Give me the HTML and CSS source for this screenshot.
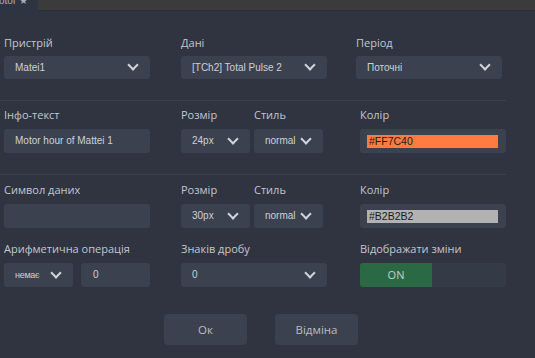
FILE: index.html
```html
<!DOCTYPE html>
<html lang="uk">
<head>
  <meta charset="UTF-8">
  <meta name="viewport" content="width=device-width, initial-scale=1.0">
  <title>Налаштування віджета</title>
  <link rel="stylesheet" href="styles.css">
</head>
<body>
  <div class="topbar">
    <div class="tab"><span>otor ★</span></div>
    <div class="tab-rest"></div>
  </div>

  <div class="form">
    <div class="row row1">
      <div class="field w146">
        <label>Пристрій</label>
        <div class="select">Matei1<i class="chev"></i></div>
      </div>
      <div class="field w146 col2">
        <label>Дані</label>
        <div class="select">[TCh2] Total Pulse 2<i class="chev"></i></div>
      </div>
      <div class="field w146 col3a">
        <label>Період</label>
        <div class="select">Поточні<i class="chev"></i></div>
      </div>
    </div>

    <div class="divider"></div>

    <div class="row row2">
      <div class="field w146">
        <label>Інфо-текст</label>
        <div class="input">Motor hour of Mattei 1</div>
      </div>
      <div class="field w69 col2">
        <label>Розмір</label>
        <div class="select">24px<i class="chev"></i></div>
      </div>
      <div class="field w69 col2b">
        <label>Стиль</label>
        <div class="select">normal<i class="chev"></i></div>
      </div>
      <div class="field w146 col3b">
        <label>Колір</label>
        <div class="color"><span class="swatch orange">#FF7C40</span></div>
      </div>
    </div>

    <div class="divider"></div>

    <div class="row row3">
      <div class="field w146">
        <label>Символ даних</label>
        <div class="input"></div>
      </div>
      <div class="field w69 col2">
        <label>Розмір</label>
        <div class="select">30px<i class="chev"></i></div>
      </div>
      <div class="field w69 col2b">
        <label>Стиль</label>
        <div class="select">normal<i class="chev"></i></div>
      </div>
      <div class="field w146 col3b">
        <label>Колір</label>
        <div class="color"><span class="swatch grey">#B2B2B2</span></div>
      </div>
    </div>

    <div class="row row4">
      <div class="field w146">
        <label>Арифметична операція</label>
        <div class="pair">
          <div class="select small">немає<i class="chev"></i></div>
          <div class="input small">0</div>
        </div>
      </div>
      <div class="field w146 col2">
        <label>Знаків дробу</label>
        <div class="select">0<i class="chev"></i></div>
      </div>
      <div class="field w146 col3">
        <label>Відображати зміни</label>
        <div class="toggle"><span class="on">ON</span><span class="off"></span></div>
      </div>
    </div>

    <div class="actions">
      <button>Ок</button>
      <button>Відміна</button>
    </div>
  </div>
</body>
</html>
```

FILE: styles.css
```css
body {
  margin: 0;
  background: #2f3440;
  color: #c3c7cf;
  font-family: 'Open Sans', sans-serif;
  overflow: hidden;
}
.topbar {
  display: flex;
  height: 11px;
}
.tab {
  width: 38px;
  background: #2e3441;
  overflow: hidden;
}
.tab span {
  display: block;
  margin-top: -5px;
  margin-left: -1px;
  font-size: 10px;
  line-height: 12px;
  color: #aab0ba;
  font-family: 'Liberation Sans', sans-serif;
}
.tab-rest {
  flex: 1;
  background: #3b3b3c;
  border-bottom: 1px solid #2a2d33;
}
.form {
  padding-left: 4px;
}
.row {
  display: flex;
}
.row1 { margin-top: 25px; }
.row2 { margin-top: 7px; }
.row3 { margin-top: 8px; }
.row4 { margin-top: 14px; }
.divider {
  height: 1px;
  width: 506px;
  margin: 21px 0 0 -4px;
  background: #3c414d;
}
.field label {
  display: block;
  font-size: 11px;
  line-height: 14px;
  color: #c3c7cf;
  margin-bottom: 6px;
}
.row2 .field label,
.row3 .field label,
.row4 .field label {
  margin-bottom: 7px;
}
.w146 { width: 146px; }
.w69 { width: 69px; }
.col2 { margin-left: 31px; }
.col2b { margin-left: 4px; }
.col3 { margin-left: 33px; }
.col3a { margin-left: 29px; }
.col3b { margin-left: 37px; }
.select,
.input,
.color {
  position: relative;
  box-sizing: border-box;
  height: 24px;
  background: #3b414e;
  border-radius: 3px;
  font-family: 'Liberation Sans', sans-serif;
  font-size: 10px;
  line-height: 24px;
  color: #cdd1d8;
  padding-left: 11px;
}
.row1 .select { height: 23px; line-height: 23px; }
.chev {
  position: absolute;
  right: 13px;
  top: 6px;
  width: 6px;
  height: 6px;
  border-right: 2px solid #d0d4da;
  border-bottom: 2px solid #d0d4da;
  transform: rotate(45deg);
}
.row1 .chev { top: 5px; }
.w69 .chev { right: 13px; }
.color {
  padding: 6px 8px 0 7px;
}
.swatch {
  display: block;
  height: 13px;
  line-height: 13px;
  padding-left: 2px;
  font-size: 10.5px;
  color: #1a1a1a;
}
.orange { background: #ff7c40; }
.grey { background: #b2b2b2; }
.pair {
  display: flex;
  gap: 8px;
}
.select.small {
  width: 69px;
  font-size: 9px;
  letter-spacing: -0.3px;
}
.input.small { width: 69px; padding-left: 12px; }
.select.small .chev { right: 13px; }
.toggle {
  display: flex;
  height: 24px;
  border-radius: 3px;
  overflow: hidden;
  background: #353b46;
}
.toggle .on {
  width: 72px;
  background: #2b6945;
  color: #c2cfc6;
  font-size: 11px;
  line-height: 24px;
  text-align: center;
}
.actions {
  display: flex;
  gap: 28px;
  margin-top: 27px;
  padding-left: 160px;
}
.actions button {
  width: 83px;
  height: 31px;
  border: none;
  border-radius: 4px;
  background: #3b414e;
  color: #b9bdc5;
  font-family: 'Open Sans', sans-serif;
  font-size: 11.5px;
}
```
